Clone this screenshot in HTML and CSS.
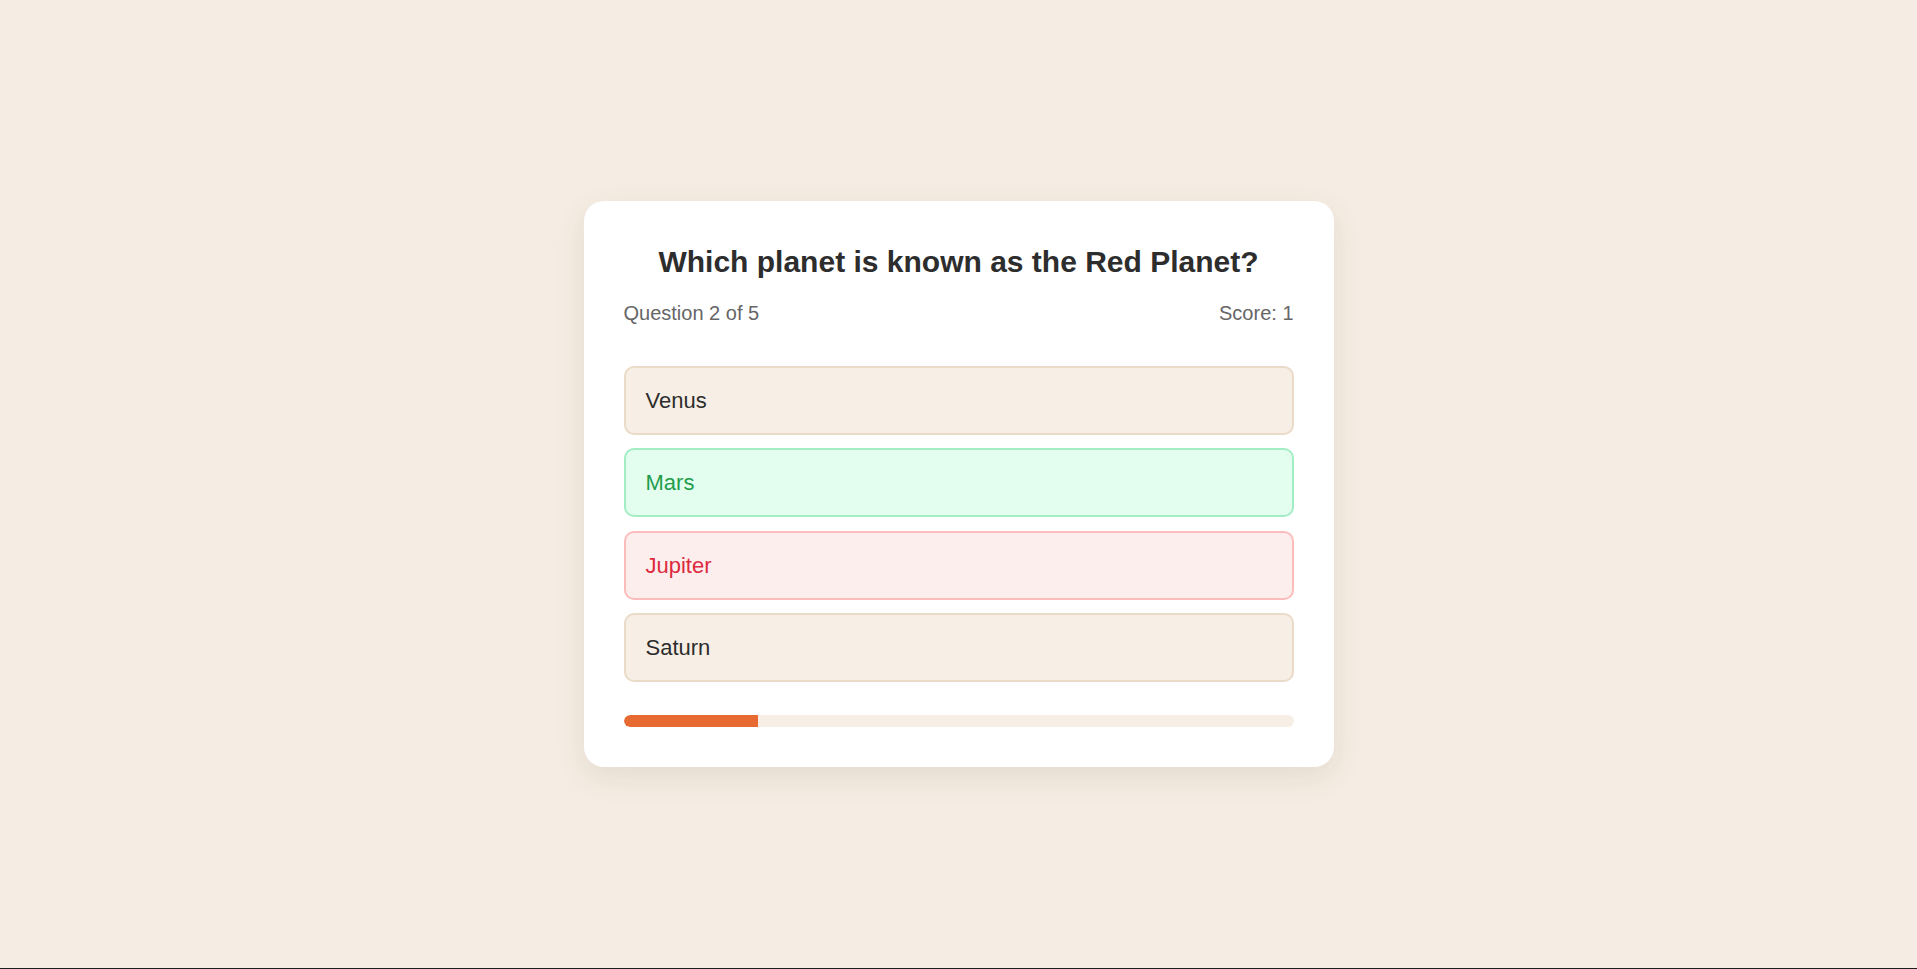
FILE: index.html
```html
<!DOCTYPE html>
<html lang="en">
<head>
<meta charset="utf-8">
<title>Quiz</title>
<link rel="stylesheet" href="styles.css">
</head>
<body>
<main class="page">
  <section class="card">
    <h1 class="question">Which planet is known as the Red Planet?</h1>
    <div class="meta">
      <span>Question 2 of 5</span>
      <span>Score: 1</span>
    </div>
    <div class="options">
      <button class="option">Venus</button>
      <button class="option option-correct">Mars</button>
      <button class="option option-wrong">Jupiter</button>
      <button class="option">Saturn</button>
    </div>
    <div class="progress"><div class="progress-fill" style="width: 20%"></div></div>
  </section>
</main>
</body>
</html>
```

FILE: styles.css
```css
html {
  background: #1e1e1e;
}
body {
  margin: 0;
  font-family: "Liberation Sans", Arial, sans-serif;
}
.page {
  min-height: calc(100vh - 1px);
  background: #f5ede3;
  display: flex;
  align-items: center;
  justify-content: center;
}
.card {
  width: 750px;
  box-sizing: border-box;
  padding: 40px;
  background: #ffffff;
  border-radius: 20px;
  box-shadow: 0 10px 30px rgba(80, 60, 30, 0.10);
}
.question {
  margin: 0;
  font-size: 30px;
  line-height: 41px;
  font-weight: 700;
  text-align: center;
  color: #2d2d2d;
}
.meta {
  display: flex;
  justify-content: space-between;
  margin-top: 20px;
  font-size: 20px;
  line-height: 23px;
  color: #666666;
}
.options {
  display: flex;
  flex-direction: column;
  gap: 13.4px;
  margin-top: 40.6px;
}
.option {
  display: block;
  width: 100%;
  text-align: left;
  font-family: inherit;
  font-size: 22px;
  line-height: 25px;
  padding: 20px;
  border: 2px solid #eadbc9;
  border-radius: 10px;
  background: #f7efe5;
  color: #2d2d2d;
}
.option-correct {
  background: #e3fdee;
  border-color: #a3edc4;
  color: #1f9d4c;
}
.option-wrong {
  background: #fdeeee;
  border-color: #fcbcbc;
  color: #dc2a3e;
}
.progress {
  margin-top: 32.7px;
  height: 12px;
  border-radius: 6px;
  background: #f7efe5;
  overflow: hidden;
}
.progress-fill {
  height: 100%;
  background: #e76a33;
  border-radius: 6px 0 0 6px;
}
```
